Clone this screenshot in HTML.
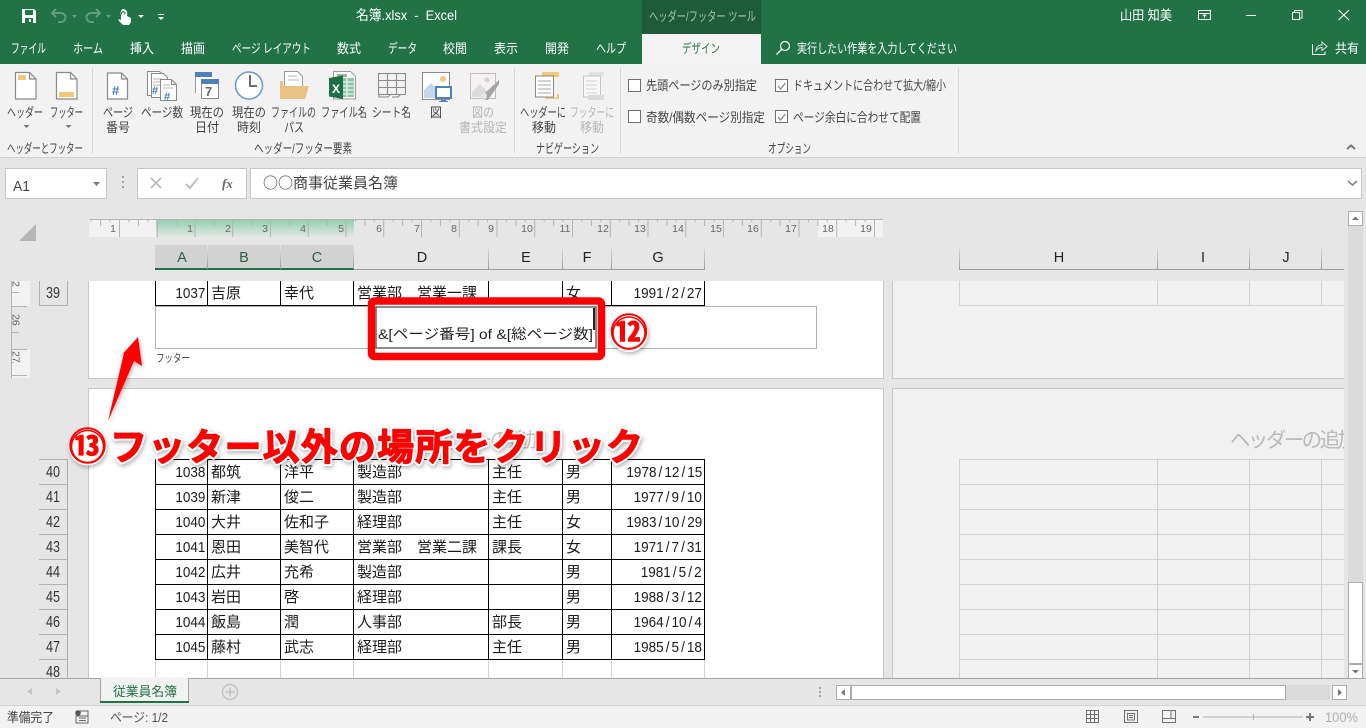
<!DOCTYPE html>
<html lang="ja"><head><meta charset="utf-8"><title>名簿.xlsx - Excel</title>
<style>
html,body{margin:0;padding:0;width:1366px;height:728px;overflow:hidden;background:#e6e6e6}
body{position:relative;font-family:"Liberation Sans","Noto Sans CJK JP",sans-serif}
svg{position:absolute;left:0;top:0;font-family:"Liberation Sans","Noto Sans CJK JP",sans-serif}
table{position:absolute;left:155px;border-spacing:0;border-collapse:separate;table-layout:fixed;border-left:1px solid #000;width:550px;color:#1c1c1c}
td{box-sizing:border-box;border-right:1px solid #000;border-bottom:1px solid #000;height:25px;padding:0 0 0 3px;font-size:15px;line-height:23px;white-space:nowrap;overflow:hidden}
td.n{text-align:right;padding:0 2px 0 0;font-size:15px}
td.n span{display:inline-block;transform:scaleX(.9);transform-origin:100% 50%}
td.n i{font-style:normal;margin:0 2.3px}
#t1{top:281px}
#t2{top:459px;border-top:1px solid #000}
.c1{width:52px}.c2,.c3{width:73px}.c4{width:135px}.c5{width:74px}.c6{width:49px}.c7{width:93px}
</style></head><body>

<svg width="1366" height="728" viewBox="0 0 1366 728">
<defs>
<pattern id="rul" x="119" y="219" width="37.75" height="18" patternUnits="userSpaceOnUse">
<path d="M.5 0V18" stroke="#b4b4b4"/><path d="M9.9 0V3M19.4 0V7M28.8 0V3" stroke="#b4b4b4"/>
</pattern>
<linearGradient id="gr" x1="0" y1="0" x2="0" y2="1"><stop offset="0" stop-color="#93d0ae"/><stop offset="1" stop-color="#e4e6e5"/></linearGradient>
<linearGradient id="hd" x1="0" y1="0" x2="0" y2="1"><stop offset="0" stop-color="#e6e6e6"/><stop offset="1" stop-color="#9a9a9a"/></linearGradient>
</defs>
<!-- chrome -->
<rect width="1366" height="64" fill="#217346"/>
<rect x="642" width="119" height="34" fill="#1e5c37"/>
<rect x="642" y="34" width="119" height="30" fill="#f3f3f3"/>
<rect y="64" width="1366" height="93" fill="#f2f2f2"/>
<rect y="157" width="1366" height="1" fill="#d2d2d2"/>

<!-- QAT -->
<path d="M22 9h12l2 2v12H22z" fill="#fff"/><rect x="25" y="10" width="8" height="5" fill="#217346"/><rect x="25" y="18" width="8" height="5" fill="#217346"/><rect x="29" y="19" width="2" height="3" fill="#fff"/>
<g fill="none" stroke="#5f9f7d" stroke-width="2"><path d="M53 13h8a4.500 4.500 0 0 1 0 9h-3M56 9l-4 4 4 4"/><path d="M99 13h-8a4.500 4.500 0 0 0 0 9h3M96 9l4 4-4 4"/></g>
<path d="M72 15h5l-2.500 3zM106 15h5l-2.500 3z" fill="#5f9f7d"/>
<path d="M123 9a4.500 4.500 0 0 1 4 6v1l4 2v4l-2 3h-6l-4-4-1-2 3 1v-5a4.500 4.500 0 0 1 2-6z" fill="#fff"/><path d="M123 11a2.500 2.500 0 0 0-2 3l1 1v-2.500h2.500V15l1-1a2.500 2.500 0 0 0-2.500-3z" fill="#217346"/>
<path d="M138 15h6l-3 3z" fill="#fff"/>
<path d="M158 14h6v1h-6zM158 17h6l-3 3z" fill="#fff"/>

<!-- title -->
<g fill="#fff">
<text x="356" y="20" font-size="14" textLength="101" lengthAdjust="spacingAndGlyphs">名簿.xlsx&#160;&#160;-&#160;&#160;Excel</text>
<text x="1120" y="20" font-size="13.500" textLength="52" lengthAdjust="spacingAndGlyphs">山田 知美</text>
</g>
<text x="649" y="21" font-size="13" fill="#a3c4b1" textLength="107" lengthAdjust="spacingAndGlyphs">ヘッダー/フッター ツール</text>
<path d="M1198.500 10.500h12v9h-12zM1198.500 13.500h12M1204.500 18v-3M1202.800 16l1.700-1.700 1.700 1.700" fill="none" stroke="#fff"/>
<path d="M1246 15.500h10" stroke="#fff" fill="none"/>
<path d="M1292.500 12.500h7v7h-7zM1294.500 12.500v-2h7.500v7.500h-2" stroke="#fff" fill="none"/>
<path d="M1338.500 10l10.500 10M1349 10l-10.500 10" stroke="#fff" fill="none"/>

<!-- tabs -->
<g fill="#fff" font-size="13">
<text x="11" y="53" textLength="35" lengthAdjust="spacingAndGlyphs">ファイル</text>
<text x="73" y="53" textLength="30" lengthAdjust="spacingAndGlyphs">ホーム</text>
<text x="130" y="53" textLength="24" lengthAdjust="spacingAndGlyphs">挿入</text>
<text x="181" y="53" textLength="24" lengthAdjust="spacingAndGlyphs">描画</text>
<text x="232" y="53" textLength="79" lengthAdjust="spacingAndGlyphs">ページ レイアウト</text>
<text x="337" y="53" textLength="24" lengthAdjust="spacingAndGlyphs">数式</text>
<text x="388" y="53" textLength="29" lengthAdjust="spacingAndGlyphs">データ</text>
<text x="443" y="53" textLength="24" lengthAdjust="spacingAndGlyphs">校閲</text>
<text x="494" y="53" textLength="24" lengthAdjust="spacingAndGlyphs">表示</text>
<text x="545" y="53" textLength="24" lengthAdjust="spacingAndGlyphs">開発</text>
<text x="596" y="53" textLength="30" lengthAdjust="spacingAndGlyphs">ヘルプ</text>
<text x="797" y="53" textLength="160" lengthAdjust="spacingAndGlyphs">実行したい作業を入力してください</text>
<text x="1335" y="53" textLength="24" lengthAdjust="spacingAndGlyphs">共有</text>
</g>
<text x="682" y="53" font-size="13" fill="#217346" textLength="38" lengthAdjust="spacingAndGlyphs">デザイン</text>
<circle cx="785" cy="46" r="4.500" fill="none" stroke="#fff" stroke-width="1.200"/><path d="M781.500 49.500l-5 5" stroke="#fff" stroke-width="1.500"/>
<path d="M1312.500 44v10.500h12.500v-3" fill="none" stroke="#fff"/><path d="M1316 51c0-4 2.500-6 6-6v-3l5 4.500-5 4v-3c-3 0-4.500 1-6 3.500z" fill="none" stroke="#d9e7df"/>

<!-- ribbon separators -->
<g fill="#d5d5d5"><rect x="92" y="68" width="1" height="85"/><rect x="514" y="68" width="1" height="85"/><rect x="620" y="68" width="1" height="85"/><rect x="958" y="68" width="1" height="85"/></g>

<!-- ribbon icons -->
<g stroke="#8a8a8a" fill="#fff" stroke-width="1.200">
<path d="M15.500 72.500h14l6.500 6.500v20h-20.500zM29.500 72.500v6.500h6.500"/>
<path d="M56.500 72.500h14l6.500 6.500v20h-20.500zM70.500 72.500v6.500h6.500"/>
<path d="M107.500 73h14l6 6v20h-20zM121.500 73v6h6"/>
</g>
<rect x="18" y="75" width="8" height="5" fill="#f0c878"/>
<rect x="59" y="92" width="15" height="5" fill="#f0c878"/>
<text x="112" y="95" font-size="13" font-weight="700" fill="#3f7cbb">#</text>
<g stroke="#8a8a8a" fill="#fff">
<path d="M147.500 71.500h12l4 4v20h-16z"/><path d="M151.500 73.500h12l4 4v20h-16z" /></g>
<path d="M153 79h9M153 82h9M153 85h9" stroke="#b5b5b5"/>
<text x="152" y="94" font-size="11" font-weight="700" fill="#3f7cbb">#</text>
<path d="M160.500 79.500h11l5 5v16h-16zM171.500 79.500v5h5" stroke="#8a8a8a" fill="#fff"/>
<path d="M163 85h7M163 88h10" stroke="#b5b5b5"/>
<text x="164" y="100" font-size="11" font-weight="700" fill="#3f7cbb">#</text>
<rect x="195" y="72" width="17" height="21" fill="#fff"/><rect x="195" y="72" width="17" height="5" fill="#4f81b9"/><path d="M195.500 77v16" stroke="#999" fill="none"/>
<rect x="201.500" y="80" width="17" height="18.500" fill="#fff" stroke="#8a8a8a"/><rect x="201" y="79" width="18" height="5" fill="#4f81b9"/>
<text x="205" y="96" font-size="13" font-weight="700" fill="#666">7</text>
<circle cx="249" cy="85.500" r="13.500" fill="#fff" stroke="#6d9bd0" stroke-width="1.600"/><path d="M250 75v11h7" fill="none" stroke="#6b6b6b" stroke-width="2"/>
<path d="M284.500 71.500h13l5 5v14h-18z" fill="#fff" stroke="#9a9a9a"/><path d="M288 76h9M288 80h11" stroke="#b5b5b5"/>
<path d="M280 81h3v5h26l-4 13h-25z" fill="#e9c283"/>
<path d="M333.500 71.500h17l5 5v22.500h-22z" fill="#fff" stroke="#9a9a9a"/><path d="M337 74h10v3h-10z" fill="#a8a8a8"/><rect x="341" y="78" width="13" height="19" fill="#8ec5a4"/><path d="M341 82h13M341 86h13M341 90h13M341 94h13M347 78v19" stroke="#fff"/>
<path d="M329 78l14-2.500v23.500l-14-2.500z" fill="#1f6f45"/>
<text x="332" y="93" font-size="12" font-weight="700" fill="#fff">X</text>
<g fill="none" stroke="#8a8a8a" stroke-width="1.100"><path d="M378.500 73.500h27v21h-27zM378.500 80.500h27M378.500 87.500h27M387.500 73.500v21M396.500 73.500v21"/><path d="M379 94v3h9l3-3M392 97h6l3-3"/></g>
<rect x="422.500" y="72.500" width="27" height="27" fill="#fff" stroke="#8a8a8a"/><circle cx="443" cy="79" r="3" fill="#f0c878"/><path d="M424 98v-8l7-7 7 7v8z" fill="#c4d7ec"/>
<rect x="436" y="87" width="15" height="11" fill="#fff" stroke="#4f81b9" stroke-width="2"/><path d="M441 100h5v1h2v1h-9v-1h2z" fill="#4f81b9"/>
<rect x="470.500" y="73.500" width="25" height="25" fill="#f4f0f3" stroke="#bdbdbd"/><circle cx="487" cy="80" r="2.500" fill="#d4d0d3"/><path d="M472 97v-5l8-8 9 9v4z" fill="#dcdcdc"/>
<path d="M499 80l-14 13-3 6 6 1 11-16z" fill="#a5a5a5"/><circle cx="484" cy="96" r="3" fill="#e3e3e3"/>
<rect x="542" y="72" width="17" height="5" fill="#f0c878"/>
<rect x="535.500" y="76" width="18" height="21" fill="#fff" stroke="#8a8a8a"/><path d="M538 81h13M538 85h13M538 89h13M538 93h13" stroke="#a5a5a5"/>
<path d="M545 99h14v-5h-2v3.500h-12z" fill="#f0c878"/>
<rect x="589" y="72" width="15" height="4" fill="#e2e0e2"/>
<rect x="583.500" y="76" width="17" height="21" fill="#f7f7f7" stroke="#c5c5c5"/><path d="M586 81h11M586 85h11M586 89h11M586 93h11" stroke="#d8d3dc"/>
<rect x="588" y="95" width="16" height="5" fill="#dcdadc"/>

<!-- ribbon text -->
<g font-size="13" fill="#444">
<text x="7" y="117" textLength="36" lengthAdjust="spacingAndGlyphs">ヘッダー</text>
<text x="50" y="117" textLength="33" lengthAdjust="spacingAndGlyphs">フッター</text>
<text x="103" y="117" textLength="30" lengthAdjust="spacingAndGlyphs">ページ</text>
<text x="106" y="132" textLength="24" lengthAdjust="spacingAndGlyphs">番号</text>
<text x="141" y="117" textLength="42" lengthAdjust="spacingAndGlyphs">ページ数</text>
<text x="190" y="117" textLength="34" lengthAdjust="spacingAndGlyphs">現在の</text>
<text x="195" y="132" textLength="24" lengthAdjust="spacingAndGlyphs">日付</text>
<text x="232" y="117" textLength="34" lengthAdjust="spacingAndGlyphs">現在の</text>
<text x="237" y="132" textLength="24" lengthAdjust="spacingAndGlyphs">時刻</text>
<text x="271" y="117" textLength="45" lengthAdjust="spacingAndGlyphs">ファイルの</text>
<text x="284" y="132" textLength="20" lengthAdjust="spacingAndGlyphs">パス</text>
<text x="321" y="117" textLength="46" lengthAdjust="spacingAndGlyphs">ファイル名</text>
<text x="372" y="117" textLength="39" lengthAdjust="spacingAndGlyphs">シート名</text>
<text x="430" y="117" textLength="12" lengthAdjust="spacingAndGlyphs">図</text>
<text x="520" y="117" textLength="46" lengthAdjust="spacingAndGlyphs">ヘッダーに</text>
<text x="532" y="132" textLength="24" lengthAdjust="spacingAndGlyphs">移動</text>
<text x="646" y="90" textLength="111" lengthAdjust="spacingAndGlyphs">先頭ページのみ別指定</text>
<text x="646" y="122" textLength="119" lengthAdjust="spacingAndGlyphs">奇数/偶数ページ別指定</text>
<text x="793" y="90" textLength="153" lengthAdjust="spacingAndGlyphs">ドキュメントに合わせて拡大/縮小</text>
<text x="793" y="122" textLength="128" lengthAdjust="spacingAndGlyphs">ページ余白に合わせて配置</text>
<text x="7" y="153" textLength="76" lengthAdjust="spacingAndGlyphs">ヘッダーとフッター</text>
<text x="254" y="153" textLength="98" lengthAdjust="spacingAndGlyphs">ヘッダー/フッター要素</text>
<text x="536" y="153" textLength="63" lengthAdjust="spacingAndGlyphs">ナビゲーション</text>
<text x="768" y="153" textLength="43" lengthAdjust="spacingAndGlyphs">オプション</text>
</g>
<g font-size="13" fill="#b5b5b5">
<text x="472" y="117" textLength="22" lengthAdjust="spacingAndGlyphs">図の</text>
<text x="459" y="132" textLength="48" lengthAdjust="spacingAndGlyphs">書式設定</text>
<text x="570" y="117" textLength="44" lengthAdjust="spacingAndGlyphs">フッターに</text>
<text x="580" y="132" textLength="24" lengthAdjust="spacingAndGlyphs">移動</text>
</g>
<path d="M23.500 125h6l-3 3zM65.500 125h6l-3 3z" fill="#777"/>
<g fill="#fff" stroke="#6f6f6f"><rect x="628.500" y="79.500" width="12" height="12"/><rect x="628.500" y="110.500" width="12" height="12"/><rect x="775.500" y="79.500" width="12" height="12"/><rect x="775.500" y="110.500" width="12" height="12"/></g>
<path d="M778 86l2.500 3 5-6M778 117l2.500 3 5-6" fill="none" stroke="#888" stroke-width="1.300"/>
<path d="M1347 149l4-3.500 4 3.500" fill="none" stroke="#777" stroke-width="2"/>

<!-- formula bar -->
<rect x="5.500" y="168.500" width="101" height="30" fill="#fff" stroke="#c6c6c6"/>
<text x="13" y="191" font-size="15" fill="#444" textLength="17" lengthAdjust="spacingAndGlyphs">A1</text>
<path d="M93 182h7l-3.500 4z" fill="#777"/>
<path d="M122 176h2v2h-2zM122 181h2v2h-2zM122 186h2v2h-2z" fill="#a5a5a5"/>
<rect x="137.500" y="168.500" width="109" height="30" fill="#fff" stroke="#c6c6c6"/>
<path d="M151 178l10 10M161 178l-10 10" stroke="#bdbdbd" stroke-width="1.800"/>
<path d="M186 184l4 4 8-10" fill="none" stroke="#bdbdbd" stroke-width="2"/>
<text x="222" y="188" font-family="Liberation Serif" font-style="italic" font-weight="700" font-size="13" fill="#666">fx</text>
<rect x="250.500" y="168.500" width="1111" height="30" fill="#fff" stroke="#c6c6c6"/>
<text x="263" y="188" font-size="15" fill="#444" font-family="Noto Sans CJK JP" textLength="135">○○商事従業員名簿</text>
<path d="M1348 181l4.500 4 4.500-4" fill="none" stroke="#777" stroke-width="1.500"/>

<!-- corner -->
<path d="M19 241l17-17v17z" fill="#b5b5b5"/>

<!-- ruler -->
<rect x="89" y="220" width="67" height="17" fill="#f2f2f2"/>
<rect x="156" y="220" width="198" height="17" fill="url(#gr)"/>
<rect x="818" y="220" width="65" height="17" fill="#f2f2f2"/>
<rect x="89" y="219" width="794" height="1" fill="#b4b4b4"/>
<rect x="89" y="219" width="794" height="18" fill="url(#rul)"/>
<g font-size="10.500" fill="#666" text-anchor="middle">
<text x="113" y="232">1</text><text x="190" y="232">1</text><text x="228" y="232">2</text><text x="265" y="232">3</text><text x="303" y="232">4</text><text x="341" y="232">5</text><text x="379" y="232">6</text><text x="417" y="232">7</text><text x="454" y="232">8</text><text x="491" y="232">9</text><text x="527" y="232">10</text><text x="565" y="232">11</text><text x="603" y="232">12</text><text x="640" y="232">13</text><text x="678" y="232">14</text><text x="716" y="232">15</text><text x="753" y="232">16</text><text x="791" y="232">17</text><text x="828" y="232">18</text><text x="866" y="232">19</text>
</g>

<!-- column headers -->
<rect x="155" y="245" width="199" height="24" fill="#d2d2d2"/>
<rect x="155" y="269" width="550" height="1" fill="#9e9e9e"/>
<rect x="959" y="269" width="385" height="1" fill="#9e9e9e"/>
<rect x="155" y="268" width="199" height="2" fill="#217346"/>
<g fill="url(#hd)"><rect x="207" y="245" width="1" height="24"/><rect x="280" y="245" width="1" height="24"/><rect x="353" y="245" width="1" height="24"/><rect x="488" y="245" width="1" height="24"/><rect x="562" y="245" width="1" height="24"/><rect x="611" y="245" width="1" height="24"/><rect x="704" y="245" width="1" height="24"/><rect x="959" y="245" width="1" height="24"/><rect x="1157" y="245" width="1" height="24"/><rect x="1249" y="245" width="1" height="24"/><rect x="1321" y="245" width="1" height="24"/></g>
<g font-size="14.500" text-anchor="middle" fill="#222">
<g fill="#2c6146"><text x="182" y="262">A</text><text x="244" y="262">B</text><text x="317" y="262">C</text></g>
<text x="422" y="262">D</text><text x="526" y="262">E</text><text x="587" y="262">F</text><text x="658" y="262">G</text><text x="1059" y="262">H</text><text x="1203" y="262">I</text><text x="1286" y="262">J</text>
</g>

<!-- pages -->
<rect x="88.500" y="280" width="795" height="98.500" fill="#fff" stroke="#c6c6c6"/>
<rect x="88.500" y="388.500" width="795" height="300" fill="#fff" stroke="#c6c6c6"/>
<rect x="892.500" y="280" width="460" height="98.500" fill="#f1f1f1" stroke="#c6c6c6"/>
<rect x="892.500" y="388.500" width="460" height="300" fill="#f1f1f1" stroke="#c6c6c6"/>
<rect x="88" y="270" width="1270" height="11" fill="#e6e6e6"/>
<!-- right grid -->
<g stroke="#d2d2d2" fill="none">
<path d="M959.500 281V305.500H1344M1157.500 281V305M1249.500 281V305M1321.500 281V305"/>
<path d="M959.500 459V679M1157.500 459V679M1249.500 459V679M1321.500 459V679"/>
<path d="M960 459.500H1344M960 484.500H1344M960 509.500H1344M960 534.500H1344M960 559.500H1344M960 584.500H1344M960 609.500H1344M960 634.500H1344M960 659.500H1344"/>
<path d="M155.500 660V679M207.500 660V679M280.500 660V679M353.500 660V679M488.500 660V679M562.500 660V679M611.500 660V679M704.500 660V679"/>
</g>
<text x="418" y="447" font-size="20.500" fill="#c4c4c4" textLength="128">ヘッダーの追加</text>
<text x="1230" y="447" font-size="20.500" fill="#b9b9b9" textLength="128">ヘッダーの追加</text>
<rect x="1344" y="200" width="22" height="490" fill="#e6e6e6"/>

<!-- vertical ruler -->
<rect x="11" y="281" width="19" height="25" fill="#f2f2f2"/><rect x="11" y="349" width="19" height="29" fill="#f2f2f2"/>
<path d="M11.500 281V378M11 292.500h8M11 306.500h16M11 319.500h3M11 332.500h8M11 349.500h16M11 362.500h3M11 375.500h16" stroke="#b4b4b4" fill="none"/>
<g font-size="10.500" fill="#666"><text transform="translate(12.500 281) rotate(90)">2</text><text transform="translate(12.500 314) rotate(90)">26</text><text transform="translate(12.500 351) rotate(90)">27</text></g>

<!-- row headers -->
<g stroke="#b0b0b0" fill="none">
<path d="M39.500 281V305.500H67.500V281"/>
<path d="M67.500 459V679M39 484.500H68M39 509.500H68M39 534.500H68M39 559.500H68M39 584.500H68M39 609.500H68M39 634.500H68M39 659.500H68M39 459.500H68"/>
</g>
<g font-size="15.500" fill="#333">
<text x="46" y="298" textLength="14" lengthAdjust="spacingAndGlyphs">39</text><text x="46" y="477" textLength="14" lengthAdjust="spacingAndGlyphs">40</text><text x="46" y="502" textLength="14" lengthAdjust="spacingAndGlyphs">41</text><text x="46" y="527" textLength="14" lengthAdjust="spacingAndGlyphs">42</text><text x="46" y="552" textLength="14" lengthAdjust="spacingAndGlyphs">43</text><text x="46" y="577" textLength="14" lengthAdjust="spacingAndGlyphs">44</text><text x="46" y="602" textLength="14" lengthAdjust="spacingAndGlyphs">45</text><text x="46" y="627" textLength="14" lengthAdjust="spacingAndGlyphs">46</text><text x="46" y="652" textLength="14" lengthAdjust="spacingAndGlyphs">47</text><text x="46" y="677" textLength="14" lengthAdjust="spacingAndGlyphs">48</text>
</g>

<!-- vertical scrollbar -->
<rect x="1348" y="211" width="15" height="468" fill="#dadada"/>
<rect x="1348.500" y="211.500" width="14" height="14" fill="#fff" stroke="#ababab"/><path d="M1352 220l3.500-3.500 3.500 3.500z" fill="#777"/>
<rect x="1348.500" y="582.500" width="14" height="81" fill="#fff" stroke="#ababab"/>
<rect x="1348.500" y="664.500" width="14" height="14" fill="#fff" stroke="#ababab"/><path d="M1352 670l3.500 3.500 3.500-3.500z" fill="#777"/>

<!-- sheet tab bar -->
<rect y="679" width="1366" height="27" fill="#e6e6e6"/>
<rect y="678" width="1366" height="1" fill="#a5a5a5"/>
<path d="M100.500 678V702H188.500V678" fill="#f2f2f2" stroke="#a5a5a5"/>
<rect x="100" y="701" width="89" height="2" fill="#217346"/>
<rect x="101" y="677.500" width="87" height="2" fill="#f2f2f2"/>
<text x="113" y="696" font-size="13" fill="#217346" textLength="64" lengthAdjust="spacingAndGlyphs">従業員名簿</text>
<path d="M32 688l-5 3.500 5 3.500zM56 688l5 3.500-5 3.500z" fill="#c4c4c4"/>
<circle cx="230" cy="692" r="7.500" fill="none" stroke="#c4c4c4" stroke-width="1.400"/><path d="M230 687.500v9M225.500 692h9" stroke="#c4c4c4" stroke-width="1.600"/>
<path d="M819 687h2v2h-2zM819 691h2v2h-2zM819 695h2v2h-2z" fill="#a5a5a5"/>
<rect x="851" y="685" width="479" height="15" fill="#dadada"/>
<rect x="836.500" y="685.500" width="14" height="14" fill="#fff" stroke="#ababab"/><path d="M845 689l-4 3.500 4 3.500z" fill="#777"/>
<rect x="851.500" y="685.500" width="434" height="14" fill="#fff" stroke="#ababab"/>
<rect x="1332.500" y="685.500" width="14" height="14" fill="#fff" stroke="#ababab"/><path d="M1338 689l4 3.500-4 3.500z" fill="#777"/>

<!-- status bar -->
<rect y="705" width="1366" height="1" fill="#d2d2d2"/>
<rect y="706" width="1366" height="22" fill="#f2f2f2"/>
<text x="7" y="722" font-size="13" fill="#444" textLength="47" lengthAdjust="spacingAndGlyphs">準備完了</text>
<circle cx="78" cy="713" r="2.800" fill="#555"/><path d="M80 711h8v12H76v-7h12M79 718h7M79 720.500h7" fill="none" stroke="#666"/>
<text x="110" y="722" font-size="13" fill="#555" textLength="58" lengthAdjust="spacingAndGlyphs">ページ: 1/2</text>
<g fill="none" stroke="#707070">
<path d="M1086.500 710.500h12v12h-12zM1090.500 710.500v12M1094.500 710.500v12M1086.500 714.500h12M1086.500 718.500h12"/>
<path d="M1124.500 710.500h13v12h-13zM1127.500 713.500h7v6.500h-7zM1129 715.500h4M1129 717.500h4"/>
<path d="M1162.500 710.500h13v12h-13zM1162.500 718.500h8.500v-8M1171 718.500h4.500"/>
</g>
<rect x="1193" y="716" width="6" height="2" fill="#777"/>
<rect x="1203" y="716.500" width="100" height="1" fill="#b0b0b0"/><rect x="1253" y="714" width="1" height="6" fill="#b0b0b0"/>
<path d="M1306 716h3v-3h2v3h3v2h-3v3h-2v-3h-3z" fill="#777"/>
<text x="1325" y="722" font-size="13.500" fill="#b0b0b0" textLength="33" lengthAdjust="spacingAndGlyphs">100%</text>
</svg>

<table id="t1"><tr><td class="n c1"><span>1037</span></td><td class="c2">吉原</td><td class="c3">幸代</td><td class="c4">営業部　営業一課</td><td class="c5"></td><td class="c6">女</td><td class="n c7"><span>1991<i>/</i>2<i>/</i>27</span></td></tr></table>

<table id="t2">
<tr><td class="n c1"><span>1038</span></td><td class="c2">都筑</td><td class="c3">洋平</td><td class="c4">製造部</td><td class="c5">主任</td><td class="c6">男</td><td class="n c7"><span>1978<i>/</i>12<i>/</i>15</span></td></tr>
<tr><td class="n c1"><span>1039</span></td><td class="c2">新津</td><td class="c3">俊二</td><td class="c4">製造部</td><td class="c5">主任</td><td class="c6">男</td><td class="n c7"><span>1977<i>/</i>9<i>/</i>10</span></td></tr>
<tr><td class="n c1"><span>1040</span></td><td class="c2">大井</td><td class="c3">佐和子</td><td class="c4">経理部</td><td class="c5">主任</td><td class="c6">女</td><td class="n c7"><span>1983<i>/</i>10<i>/</i>29</span></td></tr>
<tr><td class="n c1"><span>1041</span></td><td class="c2">恩田</td><td class="c3">美智代</td><td class="c4">営業部　営業二課</td><td class="c5">課長</td><td class="c6">女</td><td class="n c7"><span>1971<i>/</i>7<i>/</i>31</span></td></tr>
<tr><td class="n c1"><span>1042</span></td><td class="c2">広井</td><td class="c3">充希</td><td class="c4">製造部</td><td class="c5"></td><td class="c6">男</td><td class="n c7"><span>1981<i>/</i>5<i>/</i>2</span></td></tr>
<tr><td class="n c1"><span>1043</span></td><td class="c2">岩田</td><td class="c3">啓</td><td class="c4">経理部</td><td class="c5"></td><td class="c6">男</td><td class="n c7"><span>1988<i>/</i>3<i>/</i>12</span></td></tr>
<tr><td class="n c1"><span>1044</span></td><td class="c2">飯島</td><td class="c3">潤</td><td class="c4">人事部</td><td class="c5">部長</td><td class="c6">男</td><td class="n c7"><span>1964<i>/</i>10<i>/</i>4</span></td></tr>
<tr><td class="n c1"><span>1045</span></td><td class="c2">藤村</td><td class="c3">武志</td><td class="c4">経理部</td><td class="c5">主任</td><td class="c6">男</td><td class="n c7"><span>1985<i>/</i>5<i>/</i>18</span></td></tr>
</table>

<svg width="1366" height="728" viewBox="0 0 1366 728">
<defs><filter id="sh" x="-10%" y="-30%" width="120%" height="160%"><feDropShadow dx="1" dy="2" stdDeviation="2" flood-color="#000" flood-opacity=".3"/></filter></defs>
<!-- footer -->
<rect x="155.500" y="306.500" width="661" height="42" fill="#fff" stroke="#b0b0b0"/>
<text x="156" y="362" font-size="11.500" fill="#444" textLength="34" lengthAdjust="spacingAndGlyphs">フッター</text>
<rect x="371.500" y="301" width="230" height="55.500" rx="3" fill="#fff" stroke="#f00" stroke-width="7.500"/>
<rect x="376" y="307" width="220" height="41" fill="#fff" stroke="#666" stroke-width="1.500"/>
<rect x="593" y="308" width="2" height="22" fill="#222"/>
<text x="378" y="339" font-size="14" fill="#222" textLength="215" lengthAdjust="spacingAndGlyphs">&amp;[ページ番号] of &amp;[総ページ数]</text>
<!-- ⑫ -->
<g filter="url(#sh)"><circle cx="629" cy="333" r="19" fill="#fff"/></g>
<circle cx="629" cy="333" r="16" fill="#fff" stroke="#f00" stroke-width="1.500"/>
<text x="610" y="346" font-size="38" font-weight="700" fill="#f00" stroke="#f00" stroke-width=".6" font-family="Noto Sans CJK JP" textLength="38" lengthAdjust="spacingAndGlyphs">⑫</text>
<!-- arrow -->
<path d="M138 337L142 366L134 361L108 421L124 353L119 358Z" fill="#f00" filter="url(#sh)"/>
<!-- ⑬ -->
<g filter="url(#sh)"><circle cx="87.500" cy="446.500" r="19" fill="#fff"/></g>
<circle cx="87.500" cy="446.500" r="16" fill="#fff" stroke="#f00" stroke-width="1.500"/>
<text x="68.500" y="460" font-size="38" font-weight="700" fill="#f00" stroke="#f00" stroke-width=".6" font-family="Noto Sans CJK JP" textLength="38" lengthAdjust="spacingAndGlyphs">⑬</text>
<text x="110" y="460" font-size="37" font-weight="700" fill="#f00" stroke="#fff" stroke-width="5" stroke-linejoin="round" paint-order="stroke" filter="url(#sh)" font-family="Noto Sans CJK JP" textLength="533">フッター以外の場所をクリック</text>
<text x="110" y="460" font-size="37" font-weight="700" fill="#f00" stroke="#f00" stroke-width="1.200" stroke-linejoin="round" font-family="Noto Sans CJK JP" textLength="533">フッター以外の場所をクリック</text>
</svg>
</body></html>
